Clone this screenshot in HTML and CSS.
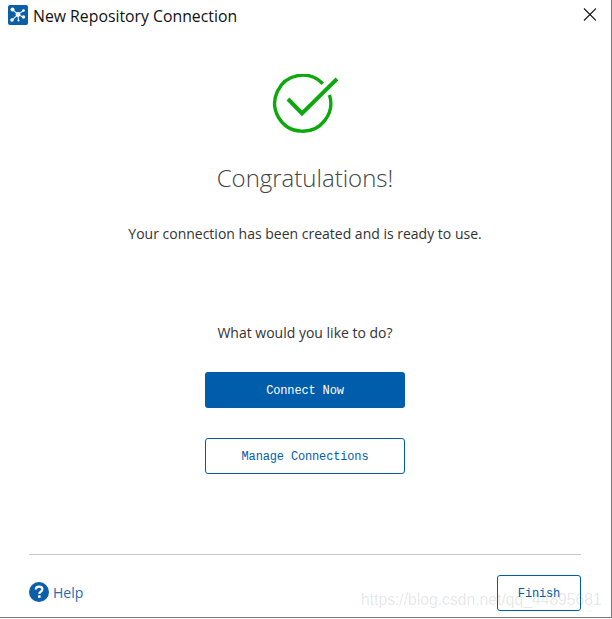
FILE: index.html
```html
<html>
  <head>
    <title>New Repository Connection</title>
    <link rel="stylesheet" href="styles.css">
  </head>
  <body>
    <div class="window">
      <div class="titlebar">
        <svg class="app-icon" width="20" height="20" viewBox="0 0 20 20">
          <rect width="20" height="20" rx="2" fill="#0b5ea8" />
          <g stroke="#cfe6f7" stroke-width="1.2">
            <path d="M10 9.5 L4.5 4.5 M10 9.5 L4 15 M10 9.5 L15.5 5.5 M10 9.5 L15 12 M10 9.5 L10.5 15.5" />
          </g>
          <g fill="#fff">
            <circle cx="10" cy="9.5" r="2.4" />
            <circle cx="4.5" cy="4.5" r="2" />
            <circle cx="4" cy="15" r="1.8" />
            <circle cx="15.5" cy="5.5" r="1.3" />
            <circle cx="15.5" cy="12" r="1.7" />
            <circle cx="10.5" cy="15.5" r="1" />
          </g>
        </svg>
        <div class="title">New Repository Connection</div>
        <svg class="close" width="14" height="14" viewBox="0 0 14 14">
          <path d="M2 0.5 L14 12.5 M14 0.5 L2 12.5" stroke="#111" stroke-width="1.1" fill="none" />
        </svg>
      </div>

      <main>
        <svg class="check" width="66" height="60" viewBox="0 0 66 60">
          <path d="M50.8 9.7 A28 28 0 1 0 57.5 21" stroke="#0ca80c" stroke-width="3.4" fill="none" />
          <path d="M16 25 L30 39.5 L65 5" stroke="#0ca80c" stroke-width="4" fill="none" />
        </svg>
        <h1>Congratulations!</h1>
        <p class="created">Your connection has been created and is ready to use.</p>
        <p class="question">What would you like to do?</p>
        <button class="btn primary">Connect Now</button>
        <button class="btn outline">Manage Connections</button>
      </main>

      <footer>
        <a class="help">
          <svg width="20" height="20" viewBox="0 0 20 20">
            <circle cx="10" cy="10" r="10" fill="#0b5ea8" />
            <path d="M6.8 7.6 C6.8 5.6 8.2 4.6 10.1 4.6 C12 4.6 13.4 5.7 13.4 7.3 C13.4 9.6 10.3 9.6 10.3 12" stroke="#fff" stroke-width="2.2" fill="none" />
            <rect x="9" y="13.3" width="2.6" height="2.5" fill="#fff" />
          </svg>
          Help
        </a>
        <button class="btn outline finish">Finish</button>
      </footer>
    </div>
    <div class="watermark">https://blog.csdn.net/qq_44895681</div>
  </body>
</html>
```

FILE: styles.css
```css
html,
body {
  margin: 0;
  background: #fff;
}

body {
  width: 612px;
  height: 619px;
  position: relative;
  overflow: hidden;
  font: 14px "Open Sans", sans-serif;
  color: #333;
}

.window {
  box-sizing: border-box;
  width: 612px;
  height: 618px;
  display: flex;
  flex-direction: column;
  border-right: 1px solid #777;
  border-bottom: 1px solid #777;
}

.titlebar {
  display: flex;
  align-items: center;
  height: 30px;
  padding: 0 15px 0 8px;
}
.app-icon {
  margin-right: 5px;
}
.title {
  flex-grow: 1;
  margin-top: 2px;
  font-size: 15.8px;
  color: #111;
}

main {
  flex-grow: 1;
  display: flex;
  flex-direction: column;
  align-items: center;
  padding-right: 1px;
}
.check {
  margin-top: 44px;
}
h1 {
  margin: 27px 0 0;
  font-size: 24px;
  font-weight: 300;
  line-height: 33px;
  color: #444;
}
.created {
  margin: 30px 0 0;
  line-height: 19px;
}
.question {
  margin: 80px 0 0;
  line-height: 19px;
}

.btn {
  box-sizing: border-box;
  width: 200px;
  height: 36px;
  padding-top: 3px;
  border-radius: 3px;
  font: 12px "Liberation Mono", monospace;
  letter-spacing: -0.15px;
  cursor: pointer;
}
.primary {
  margin-top: 30px;
  background: #005dab;
  border: 0;
  color: #fff;
}
.outline {
  background: #fff;
  border: 1px solid #005dab;
  color: #005dab;
}
main .outline {
  margin-top: 30px;
}

footer {
  margin: 0 30px 0 29px;
  height: 62px;
  border-top: 1px solid #c8c8c8;
  display: flex;
  justify-content: space-between;
  align-items: flex-end;
}
.help {
  display: flex;
  align-items: center;
  gap: 4px;
  margin-bottom: 15px;
  color: #2a6aad;
}
.finish {
  width: 84px;
  margin-bottom: 6px;
}

.watermark {
  position: absolute;
  left: 361px;
  top: 591px;
  font: 15.7px "Liberation Sans", sans-serif;
  color: rgba(0, 0, 0, 0.11);
  white-space: nowrap;
}
```
